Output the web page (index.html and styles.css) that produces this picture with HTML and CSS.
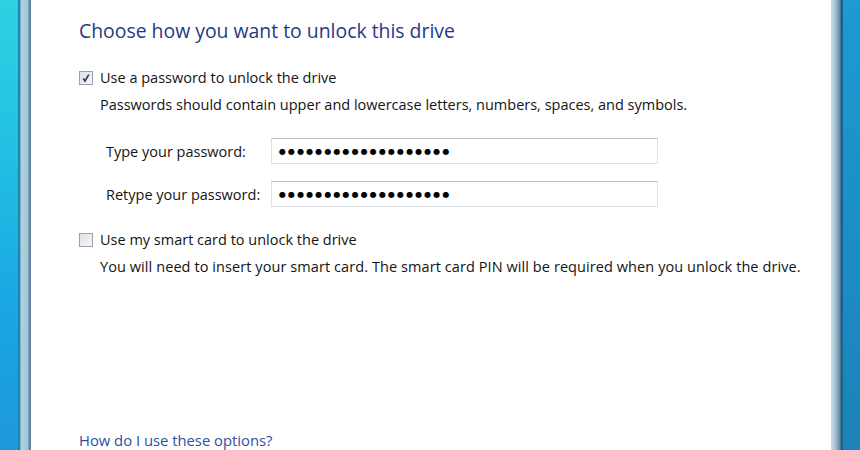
FILE: index.html
```html
<!DOCTYPE html>
<html lang="en">
<head>
  <meta charset="UTF-8">
  <meta name="viewport" content="width=device-width, initial-scale=1.0">
  <title>BitLocker Drive Encryption</title>
  <link rel="stylesheet" href="styles.css">
</head>
<body>
  <div class="window">
    <div class="frame frame-left"></div>
    <div class="dialog">
      <h1 class="title">Choose how you want to unlock this drive</h1>

      <div class="option">
        <label class="check-row">
          <span class="checkbox">
            <svg width="10" height="10" viewBox="0 0 10 10"><path d="M2.2 5.6 L4 8 L7.8 1.6" fill="none" stroke="#2a3550" stroke-width="1.6"/></svg>
          </span>
          Use a password to unlock the drive
        </label>
        <p class="hint">Passwords should contain upper and lowercase letters, numbers, spaces, and symbols.</p>

        <div class="fields">
          <div class="field">
            <span class="field-label">Type your password:</span>
            <div class="pwd-box"><span class="dots">●●●●●●●●●●●●●●●●●●●</span></div>
          </div>
          <div class="field">
            <span class="field-label">Retype your password:</span>
            <div class="pwd-box"><span class="dots">●●●●●●●●●●●●●●●●●●●</span></div>
          </div>
        </div>
      </div>

      <div class="option">
        <label class="check-row">
          <span class="checkbox"></span>
          Use my smart card to unlock the drive
        </label>
        <p class="hint hint-long">You will need to insert your smart card. The smart card PIN will be required when you unlock the drive.</p>
      </div>

      <a class="help-link" href="#">How do I use these options?</a>
    </div>
    <div class="frame frame-right"></div>
  </div>
</body>
</html>
```

FILE: styles.css
```css
html, body {
  margin: 0;
  padding: 0;
  height: 100%;
  overflow: hidden;
}
body {
  font-family: "Open Sans", "Noto Sans", sans-serif;
  font-size: 14.5px;
  color: #141414;
  background: #ffffff;
}
.window {
  display: flex;
  height: 450px;
}
.frame {
  flex: none;
}
.frame-left {
  width: 31px;
  background:
    linear-gradient(to right, transparent 0, transparent 18px, #1b7fa3 18px, #2a8fb3 20px, #b4d3e0 21px, #9fc3d6 28px, #6b8ca8 29px, #5b7c98 31px),
    linear-gradient(to bottom, #2dd1e2 0%, #22bfe3 35%, #1aa5e4 70%, #1d98dc 100%);
}
.frame-right {
  width: 29px;
  background:
    linear-gradient(to right, #c8dce6 0, #9fbdd0 5px, #7f9db4 7px, #6a8ba6 9px, #1c5f8c 10px, #17668f 12px, transparent 12px),
    linear-gradient(to bottom, #1d9ad3 0%, #1b8fc6 50%, #1c82b8 100%);
}
.dialog {
  flex: 1;
  display: flex;
  flex-direction: column;
  padding: 19px 0 0 48px;
  position: relative;
}
.title {
  margin: 0 0 25px;
  font-size: 19.4px;
  font-weight: normal;
  line-height: 24px;
  color: #1f3a83;
}
.option {
  margin-bottom: 23px;
}
.check-row {
  display: flex;
  align-items: center;
  gap: 7px;
  line-height: 20px;
}
.checkbox {
  width: 12px;
  height: 12px;
  border: 1px solid #9aa3ad;
  background: linear-gradient(135deg, #dfe2e6, #f4f5f7);
  display: flex;
  align-items: center;
  justify-content: center;
  flex: none;
}
.hint {
  margin: 7px 0 0 21px;
  line-height: 20px;
}
.hint-long {
  letter-spacing: 0.08px;
}
.fields {
  margin: 23px 0 0 27px;
  display: flex;
  flex-direction: column;
  gap: 17px;
}
.field {
  display: flex;
  align-items: center;
}
.field-label {
  width: 165px;
}
.pwd-box {
  width: 378px;
  height: 24px;
  border: 1px solid #dde2e8;
  border-top-color: #b9c0c8;
  display: flex;
  align-items: center;
  padding-left: 7px;
}
.dots {
  font-family: "DejaVu Sans", sans-serif;
  font-size: 8px;
  letter-spacing: 2.1px;
  color: #000;
}
.help-link {
  position: absolute;
  left: 48px;
  top: 431px;
  color: #2d4fa3;
  text-decoration: none;
  line-height: 19px;
  font-size: 14.8px;
}
```
